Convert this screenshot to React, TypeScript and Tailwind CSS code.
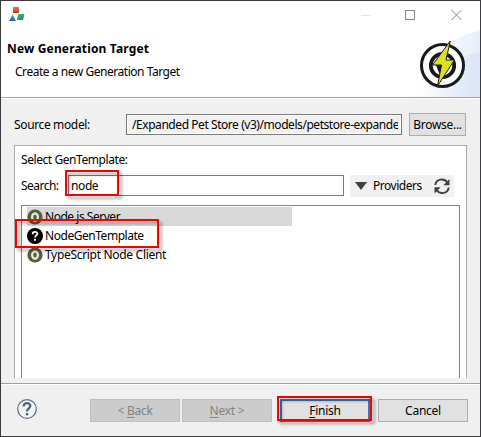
import type { ReactNode } from 'react';

function AppIcon() {
  return (
    <svg width="16" height="16" viewBox="0 0 16 16">
      <defs>
        <linearGradient id="red" x1="0" y1="0" x2="0" y2="1">
          <stop offset="0" stopColor="#f0714f" />
          <stop offset="1" stopColor="#c03c1e" />
        </linearGradient>
        <linearGradient id="blue" x1="0" y1="0" x2="0" y2="1">
          <stop offset="0" stopColor="#5a9ad6" />
          <stop offset="1" stopColor="#1f62a8" />
        </linearGradient>
        <linearGradient id="green" x1="0" y1="0" x2="1" y2="1">
          <stop offset="0" stopColor="#3fc483" />
          <stop offset="1" stopColor="#1f7d52" />
        </linearGradient>
      </defs>
      <rect x="4" y="1" width="6" height="6" fill="url(#red)" />
      <path d="M3.6 8.5 L7 15 H0 Z" fill="url(#blue)" />
      <path d="M9.2 8 H15.5 L14 14 H7.8 Z" fill="url(#green)" />
    </svg>
  );
}

function Bolt() {
  return (
    <svg width="46" height="50" viewBox="418 39 46 50">
      <circle cx="441.5" cy="65.5" r="21" fill="#fff" stroke="#1a1a1a" strokeWidth="3" />
      <circle cx="441.5" cy="65.5" r="11.7" fill="#fff" stroke="#1a1a1a" strokeWidth="3.8" />
      <path d="M435 65 L441.500 65 L438.500 74 Z" fill="#1a1a1a" />
      <path d="M449.300 41 L431.500 65 H440.500 L436.500 86 L453.500 60 H445 Z" fill="#dfe024" stroke="#1a1a1a" strokeWidth="1" />
    </svg>
  );
}

function RefreshIcon() {
  return (
    <svg width="18" height="18" viewBox="433 177 18 18" fill="none" stroke="#404040" strokeWidth="2">
      <path d="M435.300 185 C436 179 444 177.500 447.500 182.500" />
      <path d="M448.700 187.500 C448 193.500 440 195 436.500 190" />
      <path d="M449.500 179 V185.200 H443.300 Z" fill="#404040" stroke="none" />
      <path d="M434.500 193.500 V187.300 H440.700 Z" fill="#404040" stroke="none" />
    </svg>
  );
}

function TemplateIcon({ kind }: { kind: 'open' | 'unknown' }) {
  const open = kind === 'open';
  return (
    <svg width="16" height="16" viewBox="0 0 16 16" className="shrink-0">
      <circle cx="8" cy="8" r={open ? 7.6 : 8} fill={open ? '#50613b' : '#000'} />
      {open ? (
        <ellipse cx="8" cy="8" rx="2.900" ry="3.700" fill="none" stroke="#e8eddd" strokeWidth="2.200" />
      ) : (
        <>
          <path d="M5.600 6.200C5.600 3 10.500 3.300 10.400 5.800C10.400 7.400 8 7.400 8 9.600" fill="none" stroke="#fff" strokeWidth="1.800" />
          <rect x="7" y="10.700" width="2" height="2" fill="#fff" />
        </>
      )}
    </svg>
  );
}

function Row({ kind, children, selected = false, tracking }: { kind: 'open' | 'unknown'; children: ReactNode; selected?: boolean; tracking: string }) {
  return (
    <div className={`flex h-[19px] w-[265px] items-center gap-[2px] ${selected ? 'bg-[#d9d9d9]' : ''}`}>
      <TemplateIcon kind={kind} />
      <span className={tracking}>{children}</span>
    </div>
  );
}

function Mark({ place }: { place: string }) {
  return <div className={`pointer-events-none absolute border-2 border-[#f60000] drop-shadow-[3px_3px_1.5px_rgba(0,0,0,0.35)] ${place}`} />;
}

const button = 'flex h-[23px] w-[90px] items-center justify-center';

export default function App() {
  return (
    <div className="relative flex h-[437px] w-[481px] flex-col overflow-hidden border border-[#3b3a3d] bg-[#f0f0f0] font-['Noto_Sans',sans-serif] text-[12px] leading-4 whitespace-nowrap text-black">
      <header className="relative h-[96px] shrink-0 bg-white">
        <svg className="absolute right-0 bottom-0" width="70" height="67" viewBox="0 0 70 67">
          <defs>
            <linearGradient id="haze">
              <stop offset="0" stopColor="#fff" />
              <stop offset="0.35" stopColor="#fafbfe" />
              <stop offset="1" stopColor="#e8eef9" />
            </linearGradient>
            <linearGradient id="haze-front">
              <stop offset="0" stopColor="#d4def4" stopOpacity="0" />
              <stop offset="1" stopColor="#d4def4" stopOpacity="0.6" />
            </linearGradient>
          </defs>
          <path d="M0 67 C8 48 32 6 70 1 V67Z" fill="url(#haze)" />
          <path d="M12 67 C24 44 44 26 70 22 V67Z" fill="url(#haze-front)" />
        </svg>
        <div className="relative flex h-[27px] justify-between pt-[5px] pr-[17px] pl-2">
          <AppIcon />
          <svg width="102" height="12" viewBox="0 0 102 12" className="mt-[3px]" fill="none" stroke="#888">
            <path d="M0 6.500h10" stroke="#e4e4e4" />
            <rect x="44.500" y="1.500" width="9" height="9" />
            <path d="M90.500 1l10 10M100.500 1L90.500 11" />
          </svg>
        </div>
        <div className="relative flex justify-between pr-[15px] pl-[6px]">
          <div className="pt-[13px]">
            <h1 className="font-bold tracking-[0.16px]">New Generation Target</h1>
            <p className="mt-[7px] pl-2 tracking-[-0.46px]">Create a new Generation Target</p>
          </div>
          <div className="mt-[11px]"><Bolt /></div>
        </div>
      </header>
      <div className="h-[2px] shrink-0 border-t border-[#a0a0a0] bg-white" />

      <main className="flex h-[284px] shrink-0 flex-col px-[13px] pt-[14px]">
        <div className="flex h-[23px] items-center">
          <span className="w-[112px] tracking-[-0.36px]">Source model:</span>
          <div className="h-[21px] w-[276px] border border-[#7a7a7a] bg-white p-px">
            <div className="h-full overflow-hidden bg-[#f0f0f0] pt-px pr-[2px] pl-1">
              <div className="overflow-hidden tracking-[-0.44px]">/Expanded Pet Store (v3)/models/petstore-expanded</div>
            </div>
          </div>
          <div className="ml-[7px] flex h-[23px] w-[57px] items-center justify-center border border-[#adadad] bg-[#e1e1e1] tracking-[-0.3px]">Browse...</div>
        </div>
        <section className="mt-[9px] flex h-[233px] w-[453px] shrink-0 flex-col border border-b-0 border-[#a9a9b0] bg-white px-[6px] pt-[6px]">
          <div className="tracking-[-0.43px]">Select GenTemplate:</div>
          <div className="mt-[7px] flex h-[22px] items-center">
            <span className="w-[47px] tracking-[-0.52px]">Search:</span>
            <div className="flex h-[21px] w-[276px] items-center self-start border border-[#7a7a7a] pl-[2px] tracking-[-0.4px]">node</div>
            <div className="ml-[6px] flex h-[22px] w-[104px] items-center bg-[#f0f0f0] pl-[5px]">
              <svg width="12" height="8" viewBox="0 0 12 8"><path d="M0 0h12L6 8Z" fill="#404040" /></svg>
              <span className="ml-[6px] w-[60px] tracking-[-0.48px]">Providers</span>
              <RefreshIcon />
            </div>
          </div>
          <div className="mt-2 flex h-[173px] w-[439px] flex-col border border-b-0 border-[#828290] pt-px pl-[5px]">
            <Row kind="open" selected tracking="tracking-[-0.48px]">Node.js Server</Row>
            <Row kind="unknown" tracking="tracking-[-0.46px]">NodeGenTemplate</Row>
            <Row kind="open" tracking="tracking-[-0.31px]">TypeScript Node Client</Row>
          </div>
        </section>
      </main>

      <div className="h-[2px] shrink-0 border-t border-[#a0a0a0] bg-white" />
      <footer className="flex flex-1 items-start pt-[14px] pl-4 tracking-[-0.25px]">
        <svg width="20" height="20" viewBox="0 0 20 20" className="mr-[53px]">
          <circle cx="10" cy="10" r="9.300" fill="#f4f5f8" stroke="#5b6e8e" strokeWidth="1.200" />
          <path d="M6.600 7.400C6.600 3 13.500 3.400 13.300 7.100C13.300 9.400 10 9.500 10 12.500" fill="none" stroke="#50617f" strokeWidth="2.300" />
          <rect x="8.800" y="14" width="2.500" height="2.400" fill="#50617f" />
        </svg>
        <div className={`${button} border border-[#bfbfbf] bg-[#cccccc] text-[#838383]`}><span>&lt; <u className="underline-offset-2">B</u>ack</span></div>
        <div className={`${button} ml-[2px] border border-[#bfbfbf] bg-[#cccccc] text-[#838383]`}><span><u className="underline-offset-2">N</u>ext &gt;</span></div>
        <div className={`${button} ml-2 border-2 border-[#3975b9] bg-[#e1e1e1]`}><span><u className="underline-offset-2">F</u>inish</span></div>
        <div className={`${button} ml-2 border border-[#adadad] bg-[#e1e1e1]`}>Cancel</div>
      </footer>

      <Mark place="left-[64px] top-[169px] h-[26px] w-[54px]" />
      <Mark place="left-[14px] top-[218px] h-[29px] w-[144px]" />
      <Mark place="left-[276px] top-[395px] h-[25px] w-[95px]" />
    </div>
  );
}
